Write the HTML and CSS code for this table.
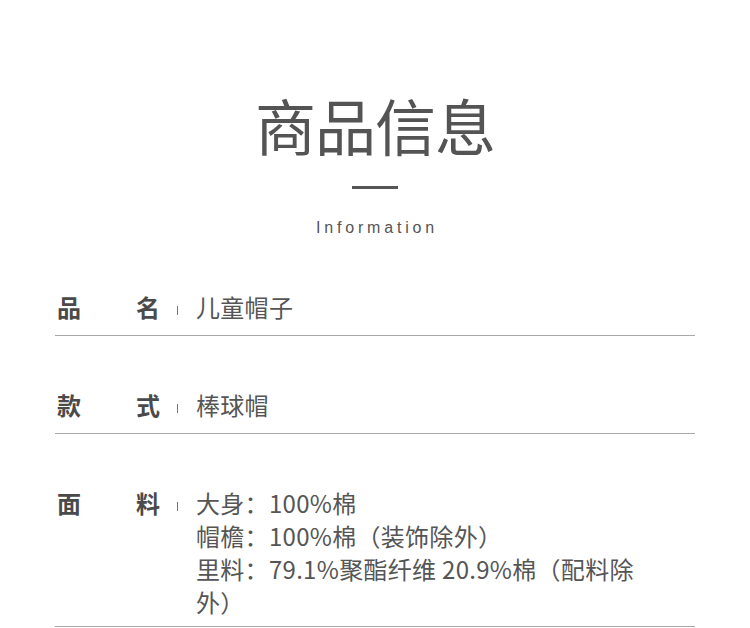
FILE: index.html
```html
<!DOCTYPE html>
<html lang="zh-CN">
<head>
<meta charset="utf-8">
<title>商品信息</title>
<link rel="stylesheet" href="styles.css">
</head>
<body>
<div class="page">
  <header class="header">
    <h1 class="title">商品信息</h1>
    <div class="dash"></div>
    <div class="subtitle">Information</div>
  </header>
  <div class="rows">
    <div class="row">
      <div class="label"><span>品</span><span>名</span></div>
      <div class="sep"></div>
      <div class="value">儿童帽子</div>
    </div>
    <div class="row">
      <div class="label"><span>款</span><span>式</span></div>
      <div class="sep"></div>
      <div class="value">棒球帽</div>
    </div>
    <div class="row">
      <div class="label"><span>面</span><span>料</span></div>
      <div class="sep"></div>
      <div class="value">大身：100%棉<br>帽檐：100%棉（装饰除外）<br>里料：79.1%聚酯纤维 20.9%棉（配料除外）</div>
    </div>
  </div>
</div>
</body>
</html>
```
FILE: styles.css
```css
html, body {
  margin: 0;
  padding: 0;
  background: #ffffff;
}
.page {
  width: 750px;
  font-family: "Noto Sans CJK SC", "Noto Sans", sans-serif;
  color: #555555;
}
.header {
  display: flex;
  flex-direction: column;
  align-items: center;
  padding-top: 93px;
}
.title {
  margin: 0;
  font-size: 61px;
  line-height: 64px;
  font-weight: 400;
  color: #545454;
  letter-spacing: -1px;
}
.dash {
  width: 46px;
  height: 3px;
  background: #555555;
  margin-top: 29px;
}
.subtitle {
  margin-top: 30px;
  font-family: "Liberation Sans", Arial, sans-serif;
  font-size: 16px;
  line-height: 18px;
  letter-spacing: 3.8px;
  color: #555555;
  padding-left: 4px;
}
.rows {
  margin: 0 55px;
  padding-top: 1px;
}
.row {
  display: flex;
  align-items: flex-start;
  border-bottom: 1px solid #a8a8a8;
  padding: 52px 0 12px 2px;
  font-size: 24px;
  line-height: 33px;
}
.row:last-child {
  padding-bottom: 8px;
}
.label {
  width: 103px;
  display: flex;
  justify-content: space-between;
  font-weight: 700;
  color: #4a4a4a;
  flex: none;
}
.sep {
  flex: none;
  width: 1px;
  height: 9px;
  background: #777777;
  margin: 16px 18px 0 17px;
}
.value {
  flex: 1;
  padding-right: 50px;
  color: #555555;
  letter-spacing: 0.3px;
}
```
